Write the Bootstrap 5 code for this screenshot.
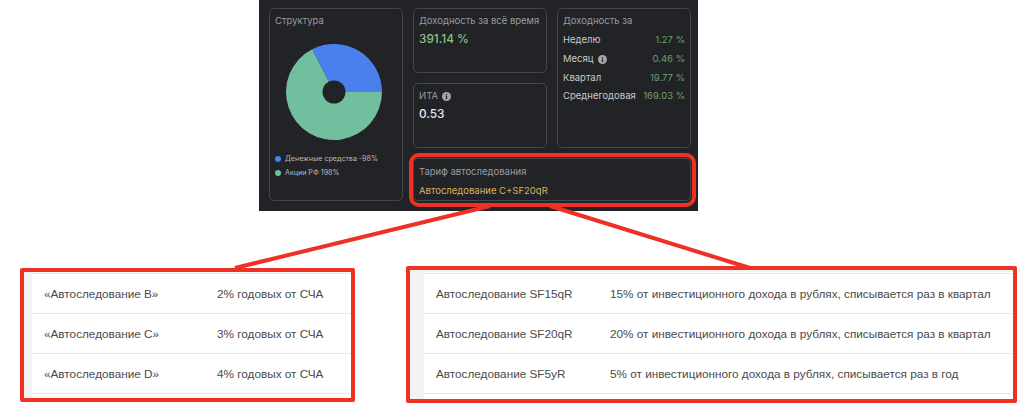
<!DOCTYPE html>
<html lang="ru">
<head>
<meta charset="UTF-8">
<title>Тарифы автоследования</title>
<link rel="stylesheet" href="https://cdn.jsdelivr.net/npm/bootstrap@5.3.3/dist/css/bootstrap.min.css">
<style>
html, body { margin: 0; height: 412px; overflow: hidden; background: #fff; }
.sheet { position: relative; width: 1024px; height: 412px; }
.arrows { position: absolute; left: 0; top: 0; pointer-events: none; z-index: 3; }

.fin-panel {
  width: 439px; height: 211px; margin-left: 259px; padding: 8px 7px 10px 10px;
  background: #222327; font-family: Inter, "Liberation Sans", sans-serif;
  grid-template-columns: 134px 134px 134px; grid-template-rows: 65px 65px 43px; gap: 10px;
}
.fin-card {
  background: transparent; border: 1px solid #45464b; border-radius: 5px;
  padding: 6px 5px; color: #9b9ca0; font-size: 9.5px; line-height: 12px;
}
.span-rows3 { grid-row: span 3; }
.span-rows2 { grid-row: span 2; }
.span-cols2 { grid-column: span 2; padding-top: 7px; }
.big-value { font-size: 11.8px; line-height: 16px; font-weight: 500; margin-top: 4px; }
.val-green { color: #8fbf86; }
.val-white { color: #e8e8ea; }
.val-gold { color: #d9b25f; margin-top: 7px; }
.pie-wrap { margin: 15px 0 0 9px; width: 100px; height: 100px; }
.legend-line { font-size: 7.1px; line-height: 14px; color: #b9babd; gap: 4px; }
.legend-first { margin-top: 10px; }
.legend-dot { width: 6px; height: 6px; border-radius: 50%; }
.dot-blue { background: #4a80ee; }
.dot-green { background: #72bfa0; }
.yield-line { color: #c9cacc; height: 18.7px; }
.yield-first { margin-top: 4px; }
.yield-line .val-green { color: #6f9f6e; }
.info-ico { width: 9px; height: 9px; margin-left: 4px; }

.tables-row { margin-top: 55px; }
.red-box { border: 4px solid #ee3124; border-radius: 2px; background: #f3f3f4; overflow: hidden; }
.red-left { width: 335px; height: 134px; margin: 2px 0 0 20px; padding-left: 8px; }
.red-right { width: 611px; height: 137px; margin-left: 51px; padding: 2px 0 0 14px; }
.rate-wrap { background: #fff; height: 100%; padding-top: 1px; }
.rate-table { margin: 0; font-family: "Liberation Sans", sans-serif; font-size: 11.75px; color: #4a4a4a; border-top: 1px solid #e8e8ea; table-layout: fixed; }
.rate-table td { height: 40px; padding: 0 0 0 12px; vertical-align: middle; color: #4a4a4a; border-bottom: 1px solid #e8e8ea; white-space: nowrap; }
.left-name { width: 173px; }
.right-name { width: 174px; }
</style>
</head>
<body>
<div class="sheet">
  <svg class="arrows" width="1024" height="412">
    <line x1="490" y1="206" x2="235" y2="268" stroke="#ee3124" stroke-width="4"/>
    <line x1="550" y1="206" x2="750" y2="268" stroke="#ee3124" stroke-width="4"/>
    <rect x="411" y="155" width="283" height="50" rx="8" fill="none" stroke="#ee3124" stroke-width="4"/>
  </svg>

  <div class="fin-panel d-grid">
    <div class="fin-card span-rows3">
      <div>Структура</div>
      <div class="pie-wrap">
        <svg width="100" height="100" viewBox="0 0 100 100">
          <path d="M50 50 L98 50 A48 48 0 0 0 28.2 7.2 Z" fill="#4a80ee"/>
          <path d="M50 50 L28.2 7.2 A48 48 0 1 0 98 50 Z" fill="#72bfa0"/>
          <circle cx="50" cy="50" r="11.5" fill="#222327"/>
        </svg>
      </div>
      <div class="legend-line legend-first d-flex align-items-center"><span class="legend-dot dot-blue"></span>Денежные средства -98%</div>
      <div class="legend-line d-flex align-items-center"><span class="legend-dot dot-green"></span>Акции РФ 198%</div>
    </div>

    <div class="fin-card">
      <div>Доходность за всё время</div>
      <div class="big-value val-green">391.14 %</div>
    </div>

    <div class="fin-card span-rows2">
      <div>Доходность за</div>
      <div class="yield-line yield-first d-flex justify-content-between align-items-center"><span>Неделю</span><span class="val-green">1.27 %</span></div>
      <div class="yield-line d-flex justify-content-between align-items-center">
        <span class="d-flex align-items-center">Месяц
          <svg class="info-ico" viewBox="0 0 10 10"><circle cx="5" cy="5" r="5" fill="#a5a6a9"/><rect x="4.3" y="4.2" width="1.4" height="3.6" fill="#222327"/><rect x="4.3" y="2.2" width="1.4" height="1.3" fill="#222327"/></svg>
        </span><span class="val-green">0.46 %</span></div>
      <div class="yield-line d-flex justify-content-between align-items-center"><span>Квартал</span><span class="val-green">19.77 %</span></div>
      <div class="yield-line d-flex justify-content-between align-items-center"><span>Среднегодовая</span><span class="val-green">169.03 %</span></div>
    </div>

    <div class="fin-card">
      <div class="d-flex align-items-center">ИТА
        <svg class="info-ico" viewBox="0 0 10 10"><circle cx="5" cy="5" r="5" fill="#a5a6a9"/><rect x="4.3" y="4.2" width="1.4" height="3.6" fill="#222327"/><rect x="4.3" y="2.2" width="1.4" height="1.3" fill="#222327"/></svg>
      </div>
      <div class="big-value val-white">0.53</div>
    </div>

    <div class="fin-card span-cols2">
      <div>Тариф автоследования</div>
      <div class="val-gold">Автоследование C+SF20qR</div>
    </div>
  </div>

  <div class="tables-row d-flex align-items-start">
    <div class="red-box red-left">
      <div class="rate-wrap">
        <table class="table rate-table">
          <tr><td class="left-name">«Автоследование B»</td><td>2% годовых от СЧА</td></tr>
          <tr><td>«Автоследование C»</td><td>3% годовых от СЧА</td></tr>
          <tr><td>«Автоследование D»</td><td>4% годовых от СЧА</td></tr>
        </table>
      </div>
    </div>
    <div class="red-box red-right">
      <div class="rate-wrap">
        <table class="table rate-table">
          <tr><td class="right-name">Автоследование SF15qR</td><td>15% от инвестиционного дохода в рублях, списывается раз в квартал</td></tr>
          <tr><td>Автоследование SF20qR</td><td>20% от инвестиционного дохода в рублях, списывается раз в квартал</td></tr>
          <tr><td>Автоследование SF5yR</td><td>5% от инвестиционного дохода в рублях, списывается раз в год</td></tr>
        </table>
      </div>
    </div>
  </div>
</div>
<script src="https://cdn.jsdelivr.net/npm/bootstrap@5.3.3/dist/js/bootstrap.bundle.min.js"></script>
</body>
</html>
